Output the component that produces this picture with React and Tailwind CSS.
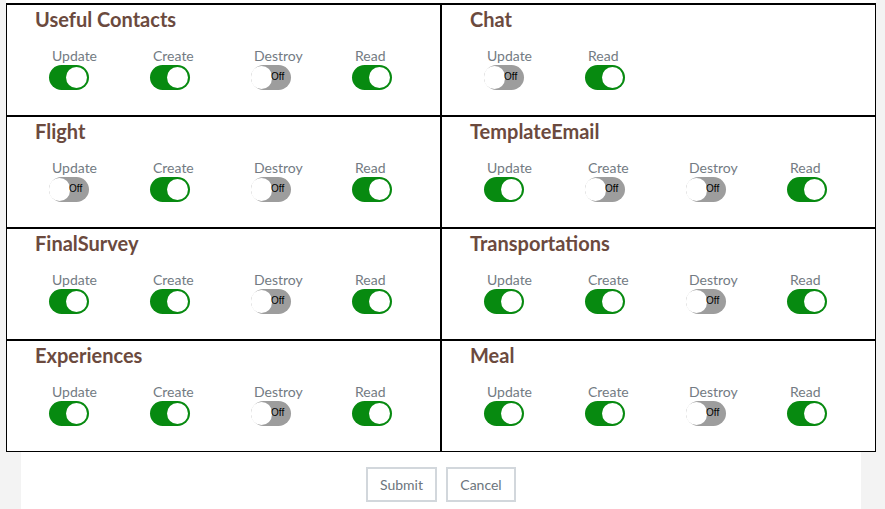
const sections = [
  { name: 'Useful Contacts', perms: [['Update', true], ['Create', true], ['Destroy', false], ['Read', true]] },
  { name: 'Chat', perms: [['Update', false], ['Read', true]] },
  { name: 'Flight', perms: [['Update', false], ['Create', true], ['Destroy', false], ['Read', true]] },
  { name: 'TemplateEmail', perms: [['Update', true], ['Create', false], ['Destroy', false], ['Read', true]] },
  { name: 'FinalSurvey', perms: [['Update', true], ['Create', true], ['Destroy', false], ['Read', true]] },
  { name: 'Transportations', perms: [['Update', true], ['Create', true], ['Destroy', false], ['Read', true]] },
  { name: 'Experiences', perms: [['Update', true], ['Create', true], ['Destroy', false], ['Read', true]] },
  { name: 'Meal', perms: [['Update', true], ['Create', true], ['Destroy', false], ['Read', true]] },
];

const Toggle = ({ on }) =>
  on ? (
    <div className="relative h-[25px] w-[40px] rounded-full bg-[#078a10]">
      <div className="absolute right-[2px] top-[2px] h-[21px] w-[21px] rounded-full bg-white" />
    </div>
  ) : (
    <div className="relative h-[25px] w-[40px] rounded-full bg-[#9d9d9d]">
      <div className="absolute left-0 top-[1px] h-[23px] w-[21px] rounded-full bg-white" />
      <span className="absolute left-[20px] top-[6px] text-[10px] leading-[12px] text-black font-['Liberation_Sans',sans-serif]">
        Off
      </span>
    </div>
  );

const Section = ({ name, perms }) => (
  <div className="h-[112px] overflow-hidden border border-black pl-[28px] pt-[2px]">
    <h3 className="text-[20px] font-bold leading-[24px] text-[#6b4a3e]">{name}</h3>
    <div className="ml-[14px] mt-[16px] flex">
      {perms.map(([label, on]) => (
        <div key={label} className="flex w-[101px] shrink-0 flex-col items-start">
          <span className="pl-[3px] text-[14px] leading-[18px] text-[#737b83]">{label}</span>
          <Toggle on={on} />
        </div>
      ))}
    </div>
  </div>
);

export default function App() {
  return (
    <div className="min-h-screen bg-[#f3f3f3] font-['Lato',sans-serif]">
      <div className="mx-[21px] w-[840px] bg-white">
        <div className="-ml-[15px] w-[870px] bg-white pt-[3px]">
          <div className="grid grid-cols-2 border-t border-black">
            {sections.map((s) => (
              <Section key={s.name} name={s.name} perms={s.perms} />
            ))}
          </div>
        </div>
        <div className="flex justify-center gap-[9px] pb-[8px] pt-[15px]">
          <button className="h-[35px] w-[71px] border-2 border-[#d2d7dc] text-[14px] text-[#6c757d]">
            Submit
          </button>
          <button className="h-[35px] w-[70px] border-2 border-[#d2d7dc] text-[14px] text-[#6c757d]">
            Cancel
          </button>
        </div>
      </div>
    </div>
  );
}
